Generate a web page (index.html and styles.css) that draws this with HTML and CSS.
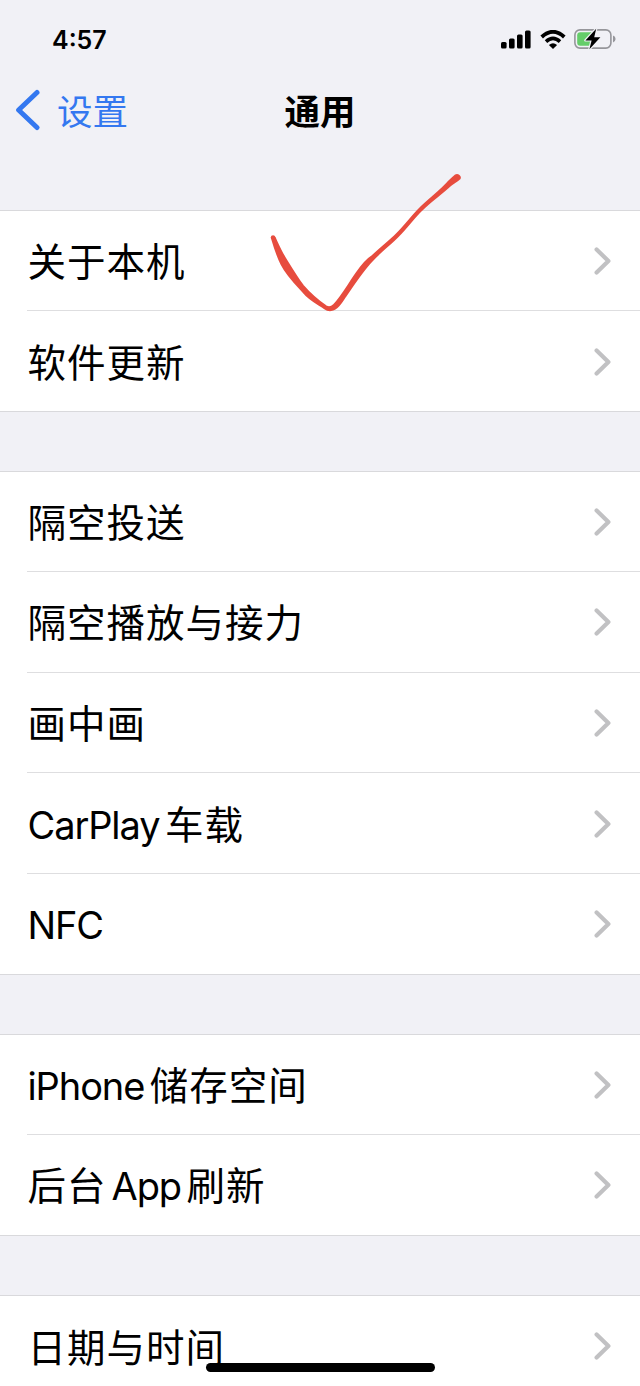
FILE: index.html
```
<!DOCTYPE html>
<html lang="zh-CN">
<head>
    <meta charset="UTF-8">
    <meta name="viewport" content="width=device-width, initial-scale=1.0">
    <title>通用</title>
    <link rel="stylesheet" href="styles.css">
</head>
<body>

<svg class="symbols" aria-hidden="true">
    <symbol id="chevron" viewBox="0 0 18 30">
        <path d="M2.6 3.5 L14.4 15 L2.6 26.5" fill="none" stroke="currentColor" stroke-width="4.2" stroke-linecap="round" stroke-linejoin="round"/>
    </symbol>
</svg>

<!-- 状态栏 -->
<div class="status-bar">
    <span class="time">4:57</span>
    <div class="status-icons">
        <svg class="signal" viewBox="0 0 30 19" width="30" height="19">
            <rect x="0" y="12" width="5.6" height="6.6" rx="1.5"/>
            <rect x="8" y="8.6" width="5.6" height="10" rx="1.5"/>
            <rect x="16" y="4.6" width="5.6" height="14" rx="1.5"/>
            <rect x="24" y="0.4" width="5.6" height="18.2" rx="1.5"/>
        </svg>
        <svg class="wifi" viewBox="0 0 26 19" width="26" height="19">
            <path d="M1.7 7 Q13 -3.4 24.3 7" fill="none" stroke="#000" stroke-width="3.8"/>
            <path d="M6 11.6 Q13 5.2 20 11.6" fill="none" stroke="#000" stroke-width="3.6"/>
            <path d="M8.9 14.9 Q13 11.4 17.1 14.9 L13 19 Z"/>
        </svg>
        <svg class="battery" viewBox="0 0 42 22" width="42" height="22">
            <rect x="0.9" y="1.9" width="36" height="18.2" rx="5" fill="none" stroke="#96969b" stroke-width="1.6"/>
            <path d="M39 7.6 Q41.6 8.6 41.6 11 Q41.6 13.4 39 14.4 Z" fill="#96969b"/>
            <path d="M6.2 4.2 H18.5 V17.8 H6.2 Q3.2 17.8 3.2 14.8 V7.2 Q3.2 4.2 6.2 4.2 Z" fill="#65cd6a"/>
            <path d="M22.2 0.8 L11.4 12.4 H17.6 L15.4 21.2 L26.4 9.2 H20.2 Z" stroke="#f1f1f6" stroke-width="2.4" paint-order="stroke" stroke-linejoin="round"/>
        </svg>
    </div>
</div>

<!-- 导航栏 -->
<header class="nav">
    <a class="back" href="#">
        <svg viewBox="0 0 26 42" width="26" height="42">
            <path d="M22 3.5 L3.6 21 L22 38.5" fill="none" stroke="currentColor" stroke-width="5" stroke-linecap="round" stroke-linejoin="round"/>
        </svg>
        <span>设置</span>
    </a>
    <h1>通用</h1>
</header>

<main class="settings">
    <section class="group">
        <div class="row"><span class="label">关于本机</span><svg class="arrow"><use href="#chevron"/></svg></div>
        <div class="row"><span class="label">软件更新</span><svg class="arrow"><use href="#chevron"/></svg></div>
    </section>

    <section class="group">
        <div class="row"><span class="label">隔空投送</span><svg class="arrow"><use href="#chevron"/></svg></div>
        <div class="row"><span class="label">隔空播放与接力</span><svg class="arrow"><use href="#chevron"/></svg></div>
        <div class="row"><span class="label">画中画</span><svg class="arrow"><use href="#chevron"/></svg></div>
        <div class="row"><span class="label"><span class="latin">CarPlay</span>车载</span><svg class="arrow"><use href="#chevron"/></svg></div>
        <div class="row"><span class="label"><span class="latin">NFC</span></span><svg class="arrow"><use href="#chevron"/></svg></div>
    </section>

    <section class="group">
        <div class="row"><span class="label"><span class="latin">iPhone</span>储存空间</span><svg class="arrow"><use href="#chevron"/></svg></div>
        <div class="row"><span class="label">后台<span class="latin inner">App</span>刷新</span><svg class="arrow"><use href="#chevron"/></svg></div>
    </section>

    <section class="group last">
        <div class="row"><span class="label">日期与时间</span><svg class="arrow"><use href="#chevron"/></svg></div>
    </section>
</main>

<!-- 手绘对勾 -->
<svg class="check-mark" viewBox="250 160 230 170" width="230" height="170">
    <path d="M271.8 237.5 C272 236 274 236 274.5 237.5 C278 245 281 252 284.5 257.5 C291 268 297 278 303 286 C310 294 318 301 326 306.5 Q330 309 334 305 C341 298 349 284 356.5 273.5 C362 265.5 368 259 372 256.5 C381 248 390 241 396.5 234.5 C405 226 412 216.5 420 208.5 C431 198 443 189 449 181.5 Q453 177.5 455.5 175.5 C458 174.5 460.5 176.5 459.5 178.5 C457 181 453 183 450 185.5 C441 194 430 201 421.5 210 C414 217 407 227 398.5 235.5 C391 243.5 380 251.5 371.5 261 C362 271 353 285 345 296.5 C341 303 337 309 331 310 Q328 310.5 324.5 308 C317 303 309 299 303.5 292 C297 285 287 275 281.5 264 C277 255 274 245 271.8 237.5 Z"/>
</svg>

<div class="home-indicator"></div>

</body>
</html>
```
FILE: styles.css
```
* {
    box-sizing: border-box;
}
body {
    font-family: Inter, "Noto Sans CJK SC", sans-serif;
    margin: 0;
    height: 1386px;
    position: relative;
    background-color: #f1f1f6;
    color: #000;
}
.symbols {
    display: none;
}
.status-bar {
    display: flex;
    justify-content: space-between;
    align-items: center;
    height: 78px;
    padding: 0 24px 0 52px;
}
.time {
    font-size: 25px;
    font-weight: 600;
    padding-top: 1px;
}
.status-icons {
    display: flex;
    align-items: center;
    gap: 8.5px;
}
.nav {
    display: grid;
    grid-template-columns: 1fr auto 1fr;
    align-items: center;
    height: 64px;
    padding: 0 15px;
}
.back {
    display: flex;
    align-items: center;
    gap: 16px;
    color: #3478f0;
    font-size: 35.5px;
    font-weight: 400;
    text-decoration: none;
}
.back span {
    padding-bottom: 2px;
}
.nav h1 {
    margin: 0;
    padding-bottom: 2px;
    font-size: 35.5px;
    font-weight: 700;
}
.settings {
    padding-top: 68px;
}
.group {
    margin-bottom: 59px;
    padding-left: 27px;
    background-color: #fff;
    border-top: 1px solid #d9d9dc;
    border-bottom: 1px solid #d9d9dc;
}
.row {
    display: flex;
    align-items: center;
    justify-content: space-between;
    height: 100.7px;
    padding-top: 1px;
    padding-right: 28px;
    border-top: 1px solid #dedee0;
}
.row:first-child {
    height: 99.2px;
    border-top: none;
}
.label {
    font-size: 38.5px;
    font-weight: 400;
    line-height: 56px;
    letter-spacing: 1px;
    padding-top: 2px;
    padding-left: 0.5px;
    white-space: nowrap;
}
.latin {
    font-size: 38px;
    letter-spacing: -1.1px;
    margin-right: 5.5px;
}
.inner {
    margin-left: 5px;
}
.arrow {
    width: 18px;
    height: 30px;
    color: #c1c1c3;
}

/* 最后一行被屏幕底部截断 */
.group.last {
    margin-bottom: 0;
    border-bottom: none;
}
.group.last .row {
    height: 90px;
    align-items: flex-start;
    padding-top: 22px;
}
.group.last .arrow {
    margin-top: 13px;
}

/* 覆盖在列表上方的标记 */
.check-mark {
    position: absolute;
    left: 250px;
    top: 160px;
    fill: #e74c3e;
    stroke: #e74c3e;
    stroke-width: 2.2px;
}
.home-indicator {
    position: absolute;
    left: 206px;
    bottom: 14px;
    width: 229px;
    height: 9px;
    border-radius: 5px;
    background-color: #000;
}
```
